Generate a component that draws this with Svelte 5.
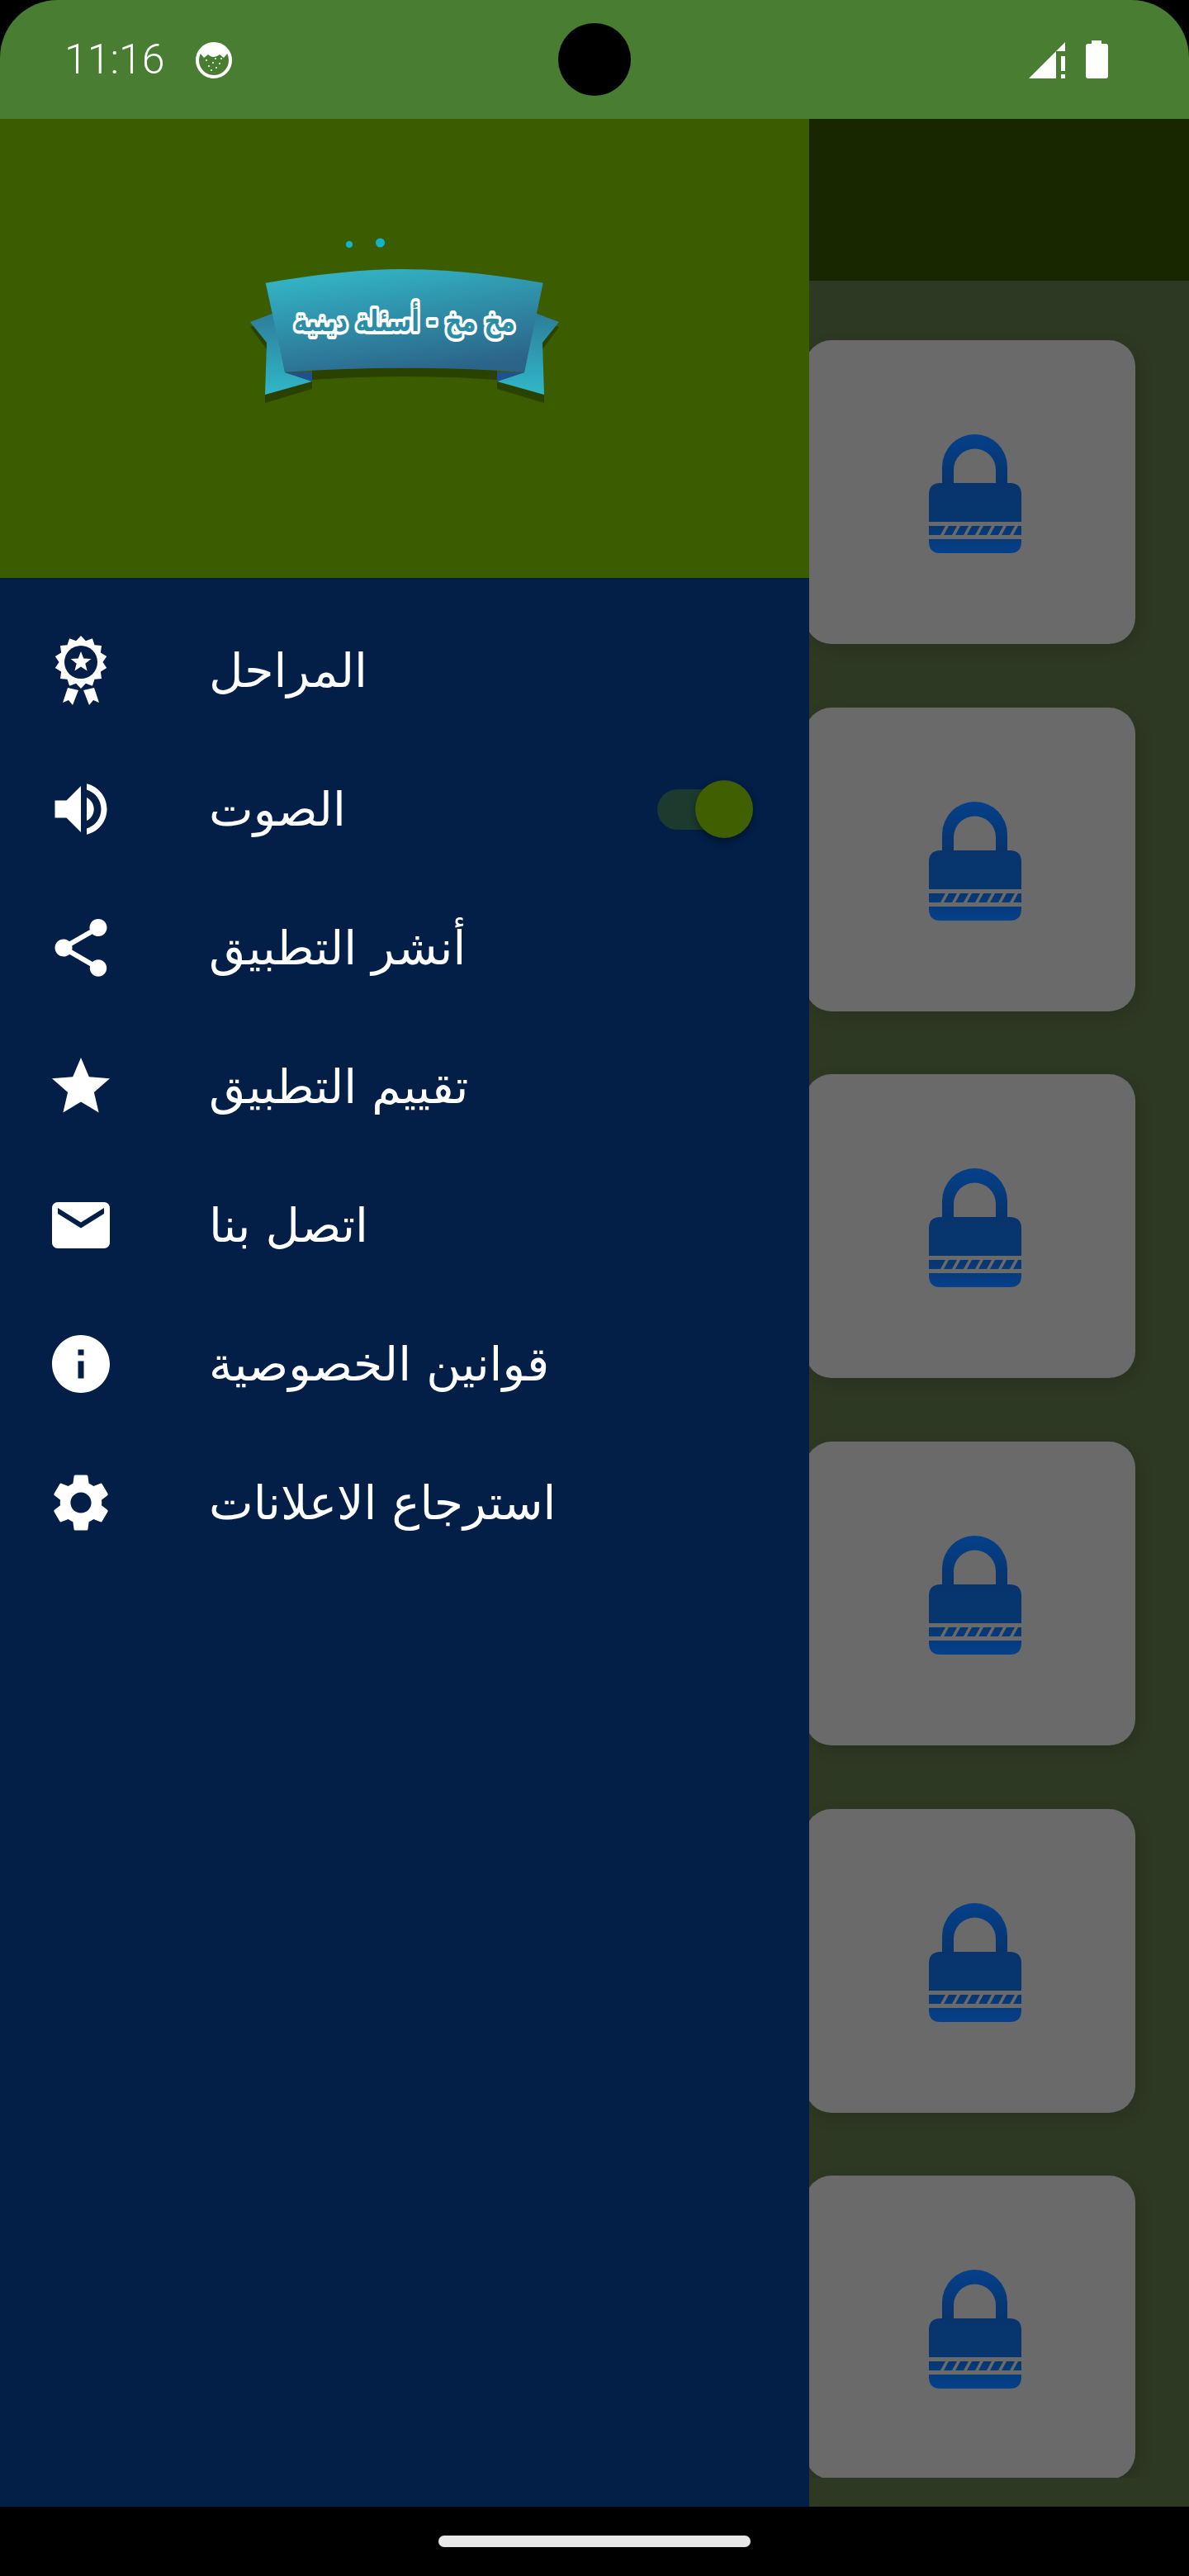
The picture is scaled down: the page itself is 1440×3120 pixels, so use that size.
<script>
	// Material icon paths on a 24 unit box
	const menu = [
		{ label: 'المراحل', icon: 'award' },
		{ label: 'الصوت', toggle: true, path: 'M3 9v6h4l5 5V4L7 9H3zm13.5 3c0-1.77-1.02-3.29-2.5-4.03v8.05c1.48-.73 2.5-2.25 2.5-4.02zM14 3.23v2.06c2.89.86 5 3.54 5 6.71s-2.11 5.85-5 6.71v2.06c4.01-.91 7-4.49 7-8.77s-2.99-7.86-7-8.77z' },
		{ label: 'أنشر التطبيق', path: 'M18 16.08c-.76 0-1.44.3-1.96.77L8.91 12.7c.05-.23.09-.46.09-.7s-.04-.47-.09-.7l7.05-4.11c.54.5 1.25.81 2.04.81 1.66 0 3-1.34 3-3s-1.34-3-3-3-3 1.34-3 3c0 .24.04.47.09.7L8.04 9.81C7.5 9.31 6.79 9 6 9c-1.66 0-3 1.34-3 3s1.34 3 3 3c.79 0 1.5-.31 2.04-.81l7.12 4.16c-.05.21-.08.43-.08.65 0 1.61 1.31 2.92 2.92 2.92 1.61 0 2.92-1.31 2.92-2.92s-1.31-2.92-2.92-2.92z' },
		{ label: 'تقييم التطبيق', path: 'M12 17.27L18.18 21l-1.64-7.03L22 9.24l-7.19-.61L12 2 9.19 8.63 2 9.24l5.46 4.73L5.82 21z' },
		{ label: 'اتصل بنا', path: 'M20 4H4c-1.1 0-1.99.9-1.99 2L2 18c0 1.1.9 2 2 2h16c1.1 0 2-.9 2-2V6c0-1.1-.9-2-2-2zm0 4l-8 5-8-5V6l8 5 8-5v2z' },
		{ label: 'قوانين الخصوصية', path: 'M12 2C6.48 2 2 6.48 2 12s4.48 10 10 10 10-4.48 10-10S17.52 2 12 2zm1 15h-2v-6h2v6zm0-8h-2V7h2v2z' },
		{ label: 'استرجاع الاعلانات', path: 'M19.14 12.94c.04-.3.06-.61.06-.94 0-.32-.02-.64-.07-.94l2.03-1.58c.18-.14.23-.41.12-.61l-1.92-3.32c-.12-.22-.37-.29-.59-.22l-2.39.96c-.5-.38-1.03-.7-1.62-.94l-.36-2.54c-.04-.24-.24-.41-.48-.41h-3.84c-.24 0-.43.17-.47.41l-.36 2.54c-.59.24-1.13.57-1.62.94l-2.39-.96c-.22-.08-.47 0-.59.22L2.74 8.87c-.12.21-.08.47.12.61l2.03 1.58c-.05.3-.09.63-.09.94s.02.64.07.94l-2.03 1.58c-.18.14-.23.41-.12.61l1.92 3.32c.12.22.37.29.59.22l2.39-.96c.5.38 1.03.7 1.62.94l.36 2.54c.05.24.24.41.48.41h3.84c.24 0 .44-.17.47-.41l.36-2.54c.59-.24 1.13-.56 1.62-.94l2.39.96c.22.08.47 0 .59-.22l1.92-3.32c.12-.22.07-.47-.12-.61l-2.01-1.58zM12 15.6c-1.98 0-3.6-1.62-3.6-3.6s1.62-3.6 3.6-3.6 3.6 1.62 3.6 3.6-1.62 3.6-3.6 3.6z' }
	];

	const levels = [1, 2, 3, 4, 5, 6];

	// star-like outline, used for the badge rim and for its star
	function burst(cx, cy, outer, inner, points) {
		const out = [];
		for (let i = 0; i < points * 2; i++) {
			const r = i % 2 ? inner : outer;
			const a = (Math.PI * i) / points - Math.PI / 2;
			out.push(`${(cx + r * Math.cos(a)).toFixed(1)},${(cy + r * Math.sin(a)).toFixed(1)}`);
		}
		return out.join(' ');
	}

	const rim = burst(48, 42, 32, 26.5, 14);
	const badgeStar = burst(48, 42, 13, 5.6, 5);
	const specks = [[-9, -2], [-6, 5], [-1, 1], [3, 7], [7, 2], [9, -4], [-3, 10], [2, -4]];
</script>

<div class="screen">
	<header class="statusbar">
		<div class="status-left">
			<span class="time">11:16</span>
			<svg class="face" viewBox="0 0 44 44" aria-hidden="true">
				<circle cx="22" cy="22" r="20" fill="none" stroke="#fff" stroke-width="4" />
				<path d="M5 13 Q22 -7 39 13 L34 19 L29 15 Q22 21 15 15 L10 19 Z" fill="#fff" />
				{#each specks as [dx, dy]}
					<circle cx={22 + dx} cy={24 + dy} r="1" fill="#fff" />
				{/each}
			</svg>
		</div>
		<div class="camera"></div>
		<div class="status-right">
			<svg class="signal" viewBox="0 0 44 44" aria-hidden="true">
				<path d="M0 44 L33 11 V44 Z M33 11 L44 0 V11 Z" fill="#fff" />
				<rect x="39" y="17" width="5" height="18" fill="#fff" />
				<rect x="39" y="39" width="5" height="5" fill="#fff" />
			</svg>
			<svg class="battery" viewBox="0 0 27 46" aria-hidden="true">
				<path d="M7 4 V0 H19 V4 H24 Q27 4 27 7 V43 Q27 46 24 46 H3 Q0 46 0 43 V7 Q0 4 3 4 Z" fill="#fff" />
			</svg>
		</div>
	</header>

	<div class="body">
		<main class="app">
			<div class="appbar"></div>
			<div class="list">
				{#each levels as level (level)}
					<div class="card">
						<svg class="lock" viewBox="0 0 112 144" aria-hidden="true">
							<defs>
								<linearGradient id="lock-fill-{level}" x1="0" y1="0" x2="0" y2="1">
									<stop offset="0" stop-color="#05408a" />
									<stop offset="0.4" stop-color="#07346c" />
									<stop offset="0.75" stop-color="#07366f" />
									<stop offset="1" stop-color="#05408a" />
								</linearGradient>
							</defs>
							<path
								fill="url(#lock-fill-{level})"
								d="M16 60 V39.5 A39.5 39.5 0 0 1 95 39.5 V60 H81 V43 A25.5 25.5 0 0 0 30 43 V60 Z M14 59 H98 Q112 59 112 73 V106 H0 V73 Q0 59 14 59 Z M0 111 H112 V122 H0 Z M0 127 H112 V130 Q112 144 98 144 H14 Q0 144 0 130 Z"
							/>
							{#each [14, 28, 42, 56, 70, 84, 98] as x}
								<path d="M{x} 122 L{x + 6} 111 H{x + 10} L{x + 4} 122 Z" fill="#6a6a6a" />
							{/each}
						</svg>
					</div>
				{/each}
			</div>
		</main>

		<aside class="drawer">
			<div class="drawer-head">
				<svg class="logo" viewBox="280 260 420 240" role="img" aria-label="مخ مخ - أسئلة دينية">
					<defs>
						<linearGradient id="band" x1="0.2" y1="0" x2="0.6" y2="1">
							<stop offset="0" stop-color="#33b6c6" />
							<stop offset="1" stop-color="#2b6489" />
						</linearGradient>
						<linearGradient id="tail" x1="0" y1="0" x2="0" y2="1">
							<stop offset="0" stop-color="#2d7d9a" />
							<stop offset="1" stop-color="#30b8c8" />
						</linearGradient>
					</defs>
					<circle cx="423" cy="296" r="4" fill="#12b5d0" />
					<circle cx="460.5" cy="294" r="5.5" fill="#12b5d0" />

					<!-- shadows -->
					<path d="M378 445 Q490 440 602 445 V460 Q490 452 378 460 Z" fill="#2a4100" />
					<path d="M303 396 L323 423 L330 390 Z" fill="#2a4100" />
					<path d="M677 396 L657 423 L650 390 Z" fill="#2a4100" />
					<path d="M321 478 V488 L378 471 V461 Z" fill="#2a4100" />
					<path d="M659 478 V488 L602 471 V461 Z" fill="#2a4100" />

					<!-- wings and tails -->
					<path d="M303 390 L332 379 L345 451 L378 462 L321 478 L323 415 Z" fill="url(#tail)" />
					<path d="M677 390 L648 379 L635 451 L602 462 L659 478 L657 415 Z" fill="url(#tail)" />
					<path d="M345 451 H378 V462 Z" fill="#1f4f94" />
					<path d="M635 451 H602 V462 Z" fill="#1f4f94" />

					<!-- main band -->
					<path d="M321.7 342.7 Q420 326 487 326 Q560 326 657.7 342.7 L635 450.7 Q560 445.7 487 445.7 Q420 445.7 345 450.7 Z" fill="url(#band)" />
					<text class="logo-text" transform="translate(490 401) scale(0.78 1)" text-anchor="middle">مخ مخ - أسئلة دينية</text>
				</svg>
			</div>
			<nav class="menu">
				{#each menu as item}
					<div class="menu-row">
						{#if item.icon === 'award'}
							<svg class="menu-icon award" viewBox="0 0 96 100" aria-hidden="true">
								<polygon points={rim} fill="#fff" />
								<circle cx="48" cy="42" r="20" fill="#031e47" />
								<polygon points={badgeStar} fill="#fff" />
								<path d="M32 73 L45 76 L38 94 L33 88 L26 91 Z" fill="#fff" />
								<path d="M64 73 L51 76 L58 94 L63 88 L70 91 Z" fill="#fff" />
							</svg>
						{:else}
							<svg class="menu-icon" viewBox="0 0 24 24" aria-hidden="true"><path d={item.path} fill="#fff" /></svg>
						{/if}
						<span class="menu-label">{item.label}</span>
						{#if item.toggle}
							<span class="switch"><span class="thumb"></span></span>
						{/if}
					</div>
				{/each}
			</nav>
		</aside>
	</div>

	<footer class="navbar"><span class="pill"></span></footer>
</div>

<style>
	:global(body) {
		margin: 0;
		background: #000;
	}

	.screen {
		position: relative;
		width: 1440px;
		height: 3120px;
		display: flex;
		flex-direction: column;
		background: #000;
		overflow: hidden;
		font-family: 'DejaVu Sans', 'Noto Sans', sans-serif;
	}

	/* status bar */
	.statusbar {
		position: relative;
		flex: 0 0 144px;
		display: flex;
		justify-content: space-between;
		align-items: center;
		padding: 0 98px 0 78px;
		box-sizing: border-box;
		background: #487d32;
		border-radius: 70px 70px 0 0;
	}

	.status-left {
		display: flex;
		align-items: center;
		gap: 38px;
	}

	.time {
		font-family: Roboto, 'Liberation Sans', sans-serif;
		font-size: 50px;
		font-weight: 300;
		color: #fff;
	}

	.face {
		width: 44px;
		height: 44px;
		margin-top: 2px;
	}

	.camera {
		position: absolute;
		left: 676px;
		top: 28px;
		width: 88px;
		height: 88px;
		border-radius: 50%;
		background: #000;
	}

	.status-right {
		display: flex;
		align-items: flex-end;
		gap: 25px;
	}

	.signal {
		width: 44px;
		height: 44px;
	}

	.battery {
		width: 27px;
		height: 46px;
	}

	/* page behind the drawer */
	.body {
		position: relative;
		flex: 0 0 2892px;
	}

	.app {
		height: 100%;
		display: flex;
		flex-direction: column;
		background: #2e3924;
	}

	.appbar {
		flex: 0 0 196px;
		background: #182700;
	}

	.list {
		height: 2661px;
		box-sizing: border-box;
		padding: 72px 0 0 975px;
		display: flex;
		flex-direction: column;
		gap: 76.7px;
		overflow: hidden;
	}

	.card {
		flex: 0 0 368px;
		width: 400px;
		display: flex;
		align-items: center;
		justify-content: center;
		padding-left: 10px;
		box-sizing: border-box;
		border-radius: 32px;
		background: #6a6a6a;
		box-shadow: 4px 6px 18px rgba(0, 0, 0, 0.14);
	}

	.lock {
		width: 112px;
		height: 144px;
		margin-left: 2px;
		margin-top: 4px;
	}

	/* drawer */
	.drawer {
		position: absolute;
		left: 0;
		top: 0;
		bottom: 0;
		width: 980px;
		display: flex;
		flex-direction: column;
		background: #031e47;
	}

	.drawer-head {
		flex: 0 0 556px;
		box-sizing: border-box;
		padding-bottom: 84px;
		display: flex;
		align-items: center;
		justify-content: center;
		background: #3c5c00;
	}

	.logo {
		width: 420px;
		height: 240px;
	}

	.logo-text {
		font-family: 'DejaVu Sans', sans-serif;
		font-size: 36px;
		font-weight: 700;
		fill: #2b8ea6;
		stroke: #fff;
		stroke-width: 8px;
		paint-order: stroke;
		stroke-linejoin: round;
		direction: rtl;
	}

	.menu {
		padding-top: 28px;
		display: flex;
		flex-direction: column;
	}

	.menu-row {
		height: 168px;
		display: flex;
		align-items: center;
		padding: 0 68px 0 56px;
	}

	.menu-icon {
		flex: 0 0 84px;
		width: 84px;
		height: 84px;
	}

	/* badge is drawn 1:1, so it takes more room than the 84px icons */
	.menu-icon.award {
		flex: 0 0 96px;
		width: 96px;
		height: 100px;
		margin: 0 -6px 4px;
	}

	.menu-label {
		margin-left: 113px;
		font-size: 57px;
		font-weight: 400;
		color: #fff;
		direction: rtl;
	}

	.switch {
		position: relative;
		margin-left: auto;
		width: 116px;
		height: 49px;
		border-radius: 25px;
		background: #1c3a2e;
	}

	.thumb {
		position: absolute;
		right: 0;
		top: -10.5px;
		width: 70px;
		height: 70px;
		border-radius: 50%;
		background: #3f5f00;
		box-shadow: 0 4px 8px rgba(0, 0, 0, 0.35);
	}

	/* gesture bar */
	.navbar {
		flex: 1;
		display: flex;
		align-items: flex-start;
		justify-content: center;
		padding-top: 35px;
		background: #000;
	}

	.pill {
		width: 378px;
		height: 14px;
		border-radius: 7px;
		background: #e8e8e8;
	}
</style>
